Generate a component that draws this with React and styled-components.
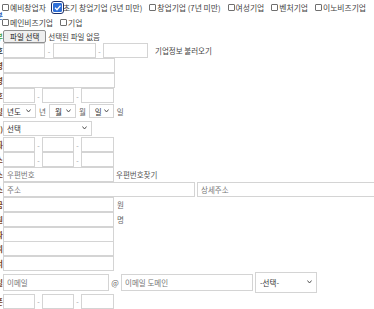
import React from "react";
import styled, { createGlobalStyle } from "styled-components";

const GlobalStyle = createGlobalStyle`
  html, body {
    margin: 0;
    padding: 0;
    background: #fff;
    overflow: hidden;
  }
  body {
    font-family: "Noto Sans CJK KR", "Noto Sans", sans-serif;
    font-size: 7.5px;
    color: #333;
  }
`;

const chevron =
  "url(\"data:image/svg+xml,%3Csvg xmlns='http://www.w3.org/2000/svg' width='6' height='4'%3E%3Cpath d='M0.5 0.5 L3 3 L5.5 0.5' fill='none' stroke='%23444' stroke-width='1'/%3E%3C/svg%3E\")";

const tick =
  "url(\"data:image/svg+xml,%3Csvg xmlns='http://www.w3.org/2000/svg' width='8' height='8'%3E%3Cpath d='M1.5 4 L3.3 5.8 L6.6 2' fill='none' stroke='white' stroke-width='1.3'/%3E%3C/svg%3E\")";

const Form = styled.div`
  display: grid;
  grid-template-columns: 3px 1fr;
  width: 374px;
  overflow: hidden;
`;

const Label = styled.div`
  display: flex;
  justify-content: flex-end;
  align-items: center;
  overflow: hidden;
  white-space: nowrap;
  font-size: 7.5px;
  font-weight: bold;
  color: ${(p) => p.$color || "#7b3f20"};
`;

const Field = styled.div`
  display: flex;
  align-items: center;
  height: ${(p) => p.$h || 15}px;
  white-space: nowrap;
  min-width: 0;
`;

const Checks = styled.div`
  display: flex;
  flex-wrap: wrap;
  align-items: center;
  column-gap: 7px;
  height: 30px;
  margin-left: -1px;
  font-size: 7.8px;
`;

const CheckItem = styled.label`
  display: flex;
  align-items: center;
  height: 15px;
  color: #444;
  white-space: nowrap;
`;

const Box = styled.input.attrs({ type: "checkbox" })`
  appearance: none;
  box-sizing: border-box;
  width: ${(p) => (p.$focus ? 9 : 7)}px;
  height: ${(p) => (p.$focus ? 9 : 7)}px;
  margin: 0 1px 0 0;
  border: 1px solid #6f6f6f;
  border-radius: 1px;
  background: #fff;
  outline: ${(p) => (p.$focus ? "1px solid #1c2f6b" : "none")};
  outline-offset: 1px;
  &:checked {
    border-color: #2f6fd8;
    background: #2f6fd8 ${tick} center / 8px 8px no-repeat;
  }
`;

const FileButton = styled.button`
  height: 13px;
  padding: 0 6px;
  font-family: inherit;
  font-size: 7.5px;
  color: #222;
  background: #efefef;
  border: 1px solid #8f8f8f;
  border-radius: 2px;
  line-height: 1;
`;

const Note = styled.span`
  margin-left: ${(p) => p.$ml ?? 3}px;
  color: ${(p) => p.$color || "#444"};
`;

const Input = styled.input`
  box-sizing: border-box;
  width: ${(p) => p.$w}px;
  height: ${(p) => p.$h || 15}px;
  flex-shrink: 0;
  margin: 0;
  padding: 0 3px;
  border: 1px solid #d4d4d4;
  border-radius: 0;
  font-family: inherit;
  font-size: 7.5px;
  color: #333;
  background: #fff;
  &::placeholder {
    color: #777;
  }
`;

const Dash = styled.span`
  width: ${(p) => p.$w || 7}px;
  text-align: center;
  color: ${(p) => p.$color || "#999"};
  font-size: ${(p) => p.$size || 7}px;
`;

const Select = styled.select`
  appearance: none;
  box-sizing: border-box;
  width: ${(p) => p.$w}px;
  height: ${(p) => p.$h || 14}px;
  margin: 0;
  padding: 0 0 0 ${(p) => p.$pl || 3}px;
  border: 1px solid #d4d4d4;
  border-radius: 0;
  font-family: inherit;
  font-size: 7.5px;
  color: #333;
  background: #fff ${chevron} right 4px center / 5px 4px no-repeat;
`;

const Unit = styled.span`
  margin: 0 3px;
  color: #666;
`;

const Hint = styled.div`
  padding-left: 10px;
  color: #aaa;
  font-size: 7px;
  height: 16px;
  line-height: 30px;
`;

function Phone({ w = [32, 32, 33], dash = 7 }) {
  return (
    <>
      <Input $w={w[0]} />
      <Dash $w={dash}>-</Dash>
      <Input $w={w[1]} />
      <Dash $w={dash}>-</Dash>
      <Input $w={w[2]} />
    </>
  );
}

const checks = [
  { text: "예비창업자" },
  { text: "초기 창업기업 (3년 미만)", checked: true },
  { text: "창업기업 (7년 미만)" },
  { text: "여성기업" },
  { text: "벤처기업" },
  { text: "이노비즈기업" },
  { text: "메인비즈기업" },
  { text: "기업" },
];

export default function App() {
  return (
    <>
      <GlobalStyle />
      <Form>
        <Label $color="#2b5cb8">기업구분</Label>
        <Checks>
          {checks.map((c) => (
            <CheckItem key={c.text}>
              <Box defaultChecked={c.checked} $focus={c.checked} />
              {c.text}
            </CheckItem>
          ))}
        </Checks>

        <Label $color="#3a9a3a">첨부</Label>
        <Field $h={13}>
          <FileButton type="button">파일 선택</FileButton>
          <Note $ml={2}>선택된 파일 없음</Note>
        </Field>

        <Label $color="#333">사업자번호</Label>
        <Field>
          <Input $w={42} />
          <Dash $w={8}>-</Dash>
          <Input $w={43} />
          <Dash $w={7}>-</Dash>
          <Input $w={45} />
          <Note $ml={7}>기업정보 불러오기</Note>
        </Field>

        <Label>기업명</Label>
        <Field>
          <Input $w={112} />
        </Field>

        <Label>대표자명</Label>
        <Field>
          <Input $w={112} />
        </Field>

        <Label>법인번호</Label>
        <Field>
          <Phone />
        </Field>

        <Label>설립일</Label>
        <Field $h={16}>
          <Select $w={33} defaultValue="">
            <option value="">년도</option>
          </Select>
          <Unit>년</Unit>
          <Select $w={27} $pl={5} defaultValue="">
            <option value="">월</option>
          </Select>
          <Unit>월</Unit>
          <Select $w={25} $pl={5} defaultValue="">
            <option value="">일</option>
          </Select>
          <Unit>일</Unit>
        </Field>

        <Label>업종(대)</Label>
        <Field $h={18}>
          <Select $w={89} $h={15} defaultValue="">
            <option value="">선택</option>
          </Select>
        </Field>

        <Label>전화</Label>
        <Field>
          <Phone />
        </Field>

        <Label>팩스</Label>
        <Field>
          <Phone />
        </Field>

        <Label>주소</Label>
        <Field $h={14}>
          <Input $w={111} placeholder="우편번호" />
          <Note $ml={2} $color="#555">우편번호찾기</Note>
        </Field>

        <Label>주소</Label>
        <Field $h={16}>
          <Input $w={192} placeholder="주소" />
          <Input $w={180} placeholder="상세주소" style={{ marginLeft: 2 }} />
        </Field>

        <Label>자본금</Label>
        <Field>
          <Input $w={111} />
          <Unit>원</Unit>
        </Field>

        <Label>종업원</Label>
        <Field>
          <Input $w={111} />
          <Unit>명</Unit>
        </Field>

        <Label>담당자</Label>
        <Field $h={14}>
          <Input $w={111} />
        </Field>

        <Label>직위</Label>
        <Field>
          <Input $w={111} />
        </Field>

        <Label>부서</Label>
        <Field>
          <Input $w={111} />
        </Field>

        <Label>이메일</Label>
        <Field $h={22}>
          <Input $w={106} $h={17} placeholder="이메일" />
          <Dash $w={12} $color="#666" $size={8}>@</Dash>
          <Input $w={132} $h={17} placeholder="이메일 도메인" />
          <Select $w={62} $h={21} $pl={4} defaultValue="" style={{ marginLeft: 2 }}>
            <option value="">-선택-</option>
          </Select>
        </Field>

        <Label>휴대폰</Label>
        <Field $h={16}>
          <Phone />
        </Field>

        <Label />
        <Hint>※ 담당자 휴대폰 번호로 안내 문자가 발송됩니다.</Hint>
      </Form>
    </>
  );
}
